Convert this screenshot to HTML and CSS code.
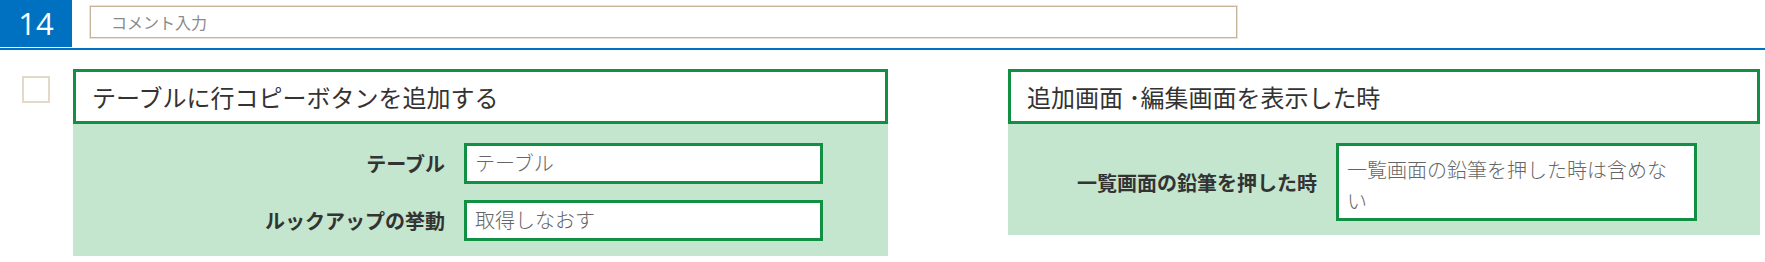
FILE: index.html
```html
<!DOCTYPE html>
<html lang="ja">
<head>
<meta charset="utf-8">
<title>Row 14</title>
<link rel="stylesheet" href="styles.css">
</head>
<body>
<div class="header">
  <div class="num">14</div>
  <div class="comment">コメント入力</div>
</div>
<div class="body">
  <div class="check"></div>
  <div class="card card-left">
    <div class="title">テーブルに行コピーボタンを追加する</div>
    <div class="fields fields-left">
      <div class="label">テーブル</div>
      <div class="input">テーブル</div>
      <div class="label">ルックアップの挙動</div>
      <div class="input">取得しなおす</div>
    </div>
  </div>
  <div class="card card-right">
    <div class="title">追加画面 ･編集画面を表示した時</div>
    <div class="fields fields-right">
      <div class="label">一覧画面の鉛筆を押した時</div>
      <div class="input input-multi">一覧画面の鉛筆を押した時は含めない</div>
    </div>
  </div>
</div>
</body>
</html>
```
FILE: styles.css
```css
* { box-sizing: border-box; }
html, body {
  margin: 0;
  padding: 0;
  background: #ffffff;
  font-family: "Noto Sans CJK JP", "Noto Sans", sans-serif;
  color: #333333;
}
.header {
  display: flex;
  align-items: flex-start;
  height: 50px;
  border-bottom: 2px solid #0070c0;
}
.num {
  width: 72px;
  height: 47px;
  background: #0070c0;
  color: #ffffff;
  font-family: "Open Sans", "Noto Sans", sans-serif;
  font-size: 31px;
  line-height: 47px;
  text-align: center;
}
.comment {
  margin-left: 18px;
  margin-top: 6px;
  width: 1147px;
  height: 32px;
  border: 1px solid #c6b49a;
  box-shadow: 0 0 0 1px #ece3d6;
  padding-left: 20px;
  font-size: 16px;
  line-height: 30px;
  color: #8a8a8a;
}
.body {
  display: flex;
  align-items: flex-start;
  padding: 19px 0 0 22px;
}
.check {
  width: 28px;
  height: 27px;
  margin-top: 7px;
  border: 2px solid #e4d8c8;
  background: #ffffff;
  flex: none;
}
.card {
  background: #c4e5ce;
  flex: none;
}
.card-left {
  width: 815px;
  margin-left: 23px;
}
.card-right {
  width: 752px;
  margin-left: 120px;
}
.title {
  height: 55px;
  border: 3px solid #118f42;
  background: #ffffff;
  padding-left: 16px;
  display: flex;
  align-items: center;
  font-size: 24px;
  color: #333333;
  white-space: pre;
}
.fields {
  display: grid;
  column-gap: 19px;
  align-items: center;
}
.fields-left {
  grid-template-columns: 1fr 359px;
  row-gap: 16px;
  padding: 19px 65px 15px 0;
}
.fields-right {
  grid-template-columns: 1fr 361px;
  padding: 19px 63px 14px 0;
}
.label {
  text-align: right;
  font-weight: 700;
  font-size: 20px;
  color: #333333;
  white-space: nowrap;
}
.input {
  height: 41px;
  border: 3px solid #118f42;
  background: #ffffff;
  padding: 0 8px;
  font-size: 20px;
  font-weight: 300;
  line-height: 34px;
  color: #666666;
  white-space: nowrap;
}
.input-multi {
  height: 78px;
  padding: 8px 8px 2px;
  line-height: 31px;
  white-space: normal;
}
```
